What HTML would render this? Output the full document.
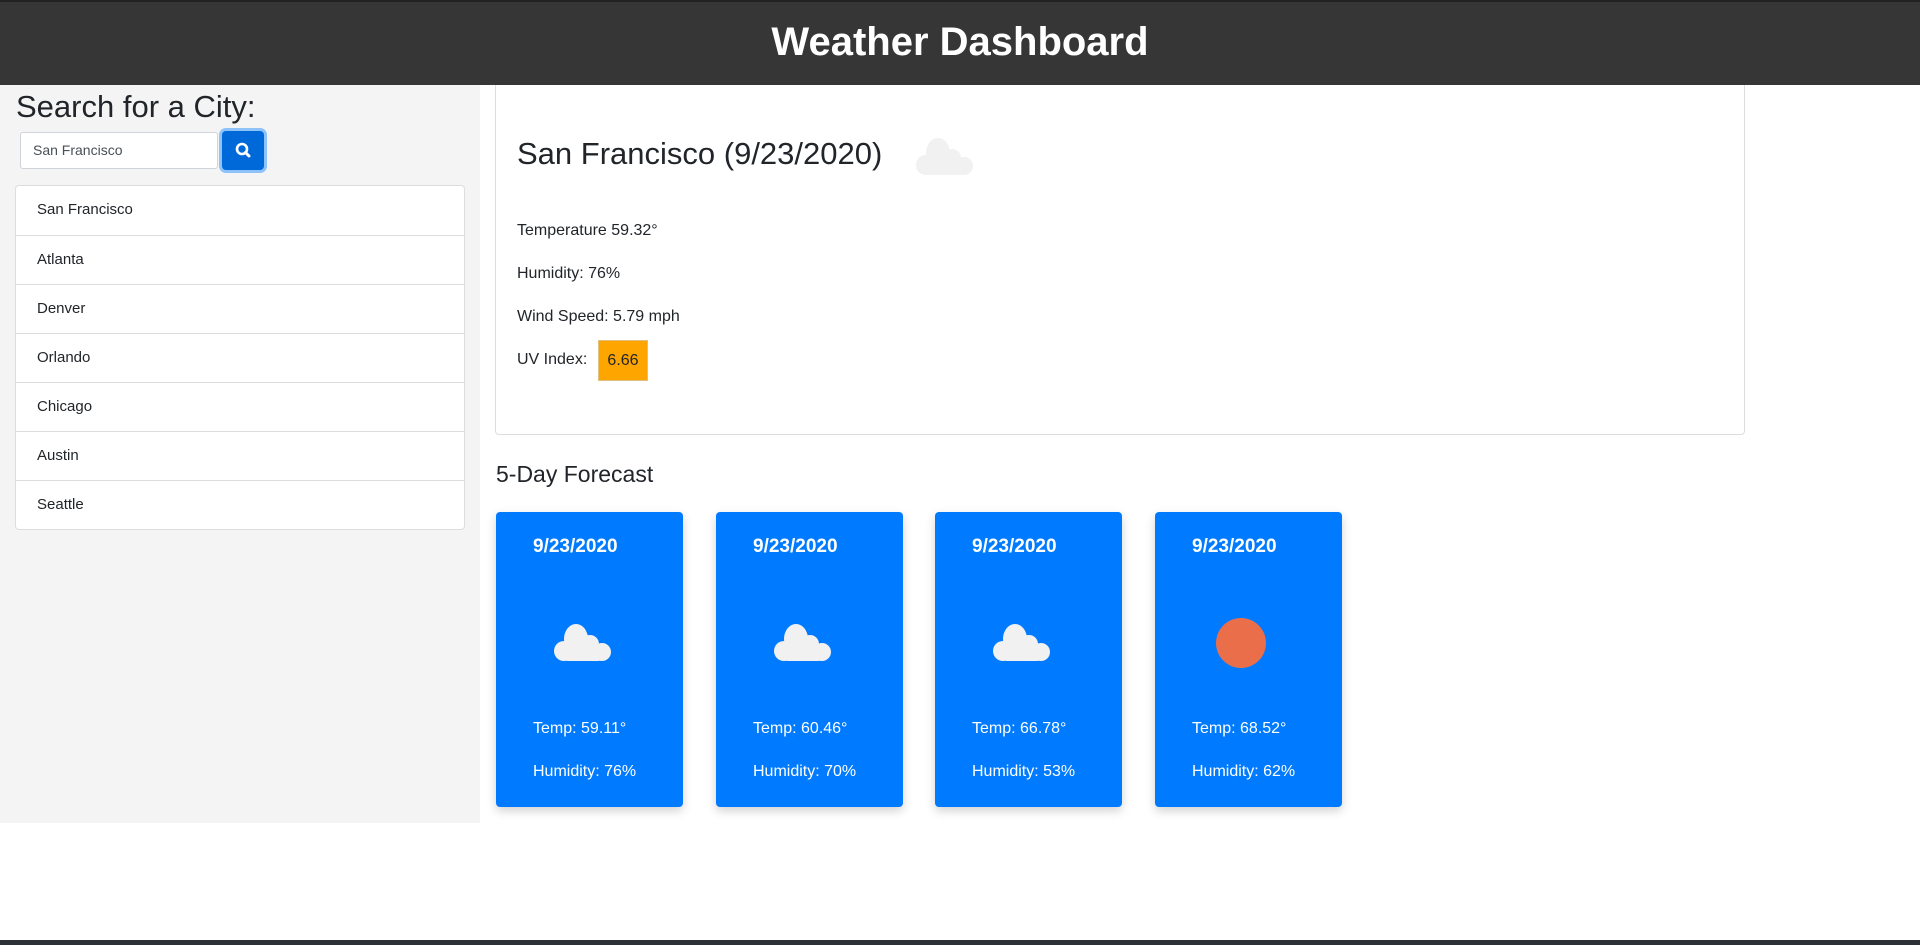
<!DOCTYPE html>
<html><head><meta charset="utf-8"><style>
*{box-sizing:border-box;margin:0;padding:0}
body{width:1920px;height:945px;overflow:hidden;background:#fff;font-family:"Liberation Sans",sans-serif;color:#212529;position:relative}
.hdr{position:absolute;left:0;top:0;width:1920px;height:85px;background:#363636;border-top:2px solid #222;color:#fff;text-align:center;font-weight:bold;font-size:40px;line-height:80px;z-index:2}
.side{position:absolute;left:0;top:85px;width:480px;height:738px;background:#f4f4f4}
.side h2{position:absolute;left:16px;top:4px;font-size:31px;font-weight:normal;color:#212529}
.inp{position:absolute;left:20px;top:47px;width:198px;height:37px;border:1px solid #ced4da;border-radius:3px;background:#fff;font-size:14px;line-height:35px;padding-left:12px;color:#495057}
.btn{position:absolute;left:222px;top:46px;width:42px;height:39px;background:#0069d9;border-radius:4px;box-shadow:0 0 0 3px rgba(38,143,255,.5)}
.list{position:absolute;left:15px;top:100px;width:450px;border:1px solid #ddd;border-radius:4px;background:#fff}
.list div{height:49px;border-top:1px solid #ddd;font-size:15px;line-height:48px;padding-left:21px}
.list div:first-child{border-top:none}
.card{position:absolute;left:495px;top:85px;width:1250px;height:350px;border:1px solid #ddd;border-top:none;border-radius:0 0 4px 4px}
.card h2{position:absolute;left:21px;top:51px;font-size:31px;font-weight:normal}
.card p{position:absolute;left:21px;font-size:16px}
.uv{position:absolute;left:102px;top:255px;width:50px;height:41px;background:#ffa500;border:1px solid #e0c080;font-size:16px;line-height:39px;text-align:center}
h3{position:absolute;left:496px;top:461px;font-size:23px;font-weight:normal}
.f{position:absolute;top:512px;width:187px;height:295px;background:#007bff;border-radius:4px;box-shadow:0 4px 10px rgba(0,0,0,.18);color:#fff}
.f b{position:absolute;left:37px;top:24px;font-size:19px}
.f .t{position:absolute;left:37px;top:208px;font-size:16px}
.f .h{position:absolute;left:37px;top:251px;font-size:16px}
.f svg{position:absolute;left:56px;top:110px}
.sun{position:absolute;left:61px;top:106px;width:50px;height:50px;border-radius:50%;background:#eb6e4b}
.bot{position:absolute;left:0;top:940px;width:1920px;height:5px;background:#2b3137}
</style></head><body>
<div class="hdr">Weather Dashboard</div>
<div class="side">
<h2>Search for a City:</h2>
<div class="inp">San Francisco</div>
<div class="btn"><svg width="42" height="39" viewBox="0 0 42 39"><circle cx="20" cy="18" r="5" fill="none" stroke="#fff" stroke-width="2.6"/><line x1="23.5" y1="21.5" x2="27" y2="25" stroke="#fff" stroke-width="3" stroke-linecap="round"/></svg></div>
<div class="list"><div>San Francisco</div><div>Atlanta</div><div>Denver</div><div>Orlando</div><div>Chicago</div><div>Austin</div><div>Seattle</div></div>
</div>
<div class="card">
<h2>San Francisco (9/23/2020)</h2>
<svg style="position:absolute;left:418px;top:51px" width="62" height="40" viewBox="0 0 62 40"><g fill="#f1f1f1"><ellipse cx="24" cy="17" rx="12" ry="15"/><circle cx="38" cy="22" r="9"/><circle cx="12" cy="29" r="10"/><circle cx="50" cy="30" r="9"/><rect x="12" y="22" width="38" height="17" rx="4"/></g></svg>
<p style="top:137px">Temperature 59.32°</p>
<p style="top:180px">Humidity: 76%</p>
<p style="top:223px">Wind Speed: 5.79 mph</p>
<p style="top:266px">UV Index:</p>
<div class="uv">6.66</div>
</div>
<h3>5-Day Forecast</h3>
<div class="f" style="left:496px"><b>9/23/2020</b><svg width="62" height="40" viewBox="0 0 62 40"><g fill="#f1f1f1"><ellipse cx="24" cy="17" rx="12" ry="15"/><circle cx="38" cy="22" r="9"/><circle cx="12" cy="29" r="10"/><circle cx="50" cy="30" r="9"/><rect x="12" y="22" width="38" height="17" rx="4"/></g></svg><div class="t">Temp: 59.11°</div><div class="h">Humidity: 76%</div></div>
<div class="f" style="left:716px"><b>9/23/2020</b><svg width="62" height="40" viewBox="0 0 62 40"><g fill="#f1f1f1"><ellipse cx="24" cy="17" rx="12" ry="15"/><circle cx="38" cy="22" r="9"/><circle cx="12" cy="29" r="10"/><circle cx="50" cy="30" r="9"/><rect x="12" y="22" width="38" height="17" rx="4"/></g></svg><div class="t">Temp: 60.46°</div><div class="h">Humidity: 70%</div></div>
<div class="f" style="left:935px"><b>9/23/2020</b><svg width="62" height="40" viewBox="0 0 62 40"><g fill="#f1f1f1"><ellipse cx="24" cy="17" rx="12" ry="15"/><circle cx="38" cy="22" r="9"/><circle cx="12" cy="29" r="10"/><circle cx="50" cy="30" r="9"/><rect x="12" y="22" width="38" height="17" rx="4"/></g></svg><div class="t">Temp: 66.78°</div><div class="h">Humidity: 53%</div></div>
<div class="f" style="left:1155px"><b>9/23/2020</b><div class="sun"></div><div class="t">Temp: 68.52°</div><div class="h">Humidity: 62%</div></div>
<div class="bot"></div>
</body></html>
